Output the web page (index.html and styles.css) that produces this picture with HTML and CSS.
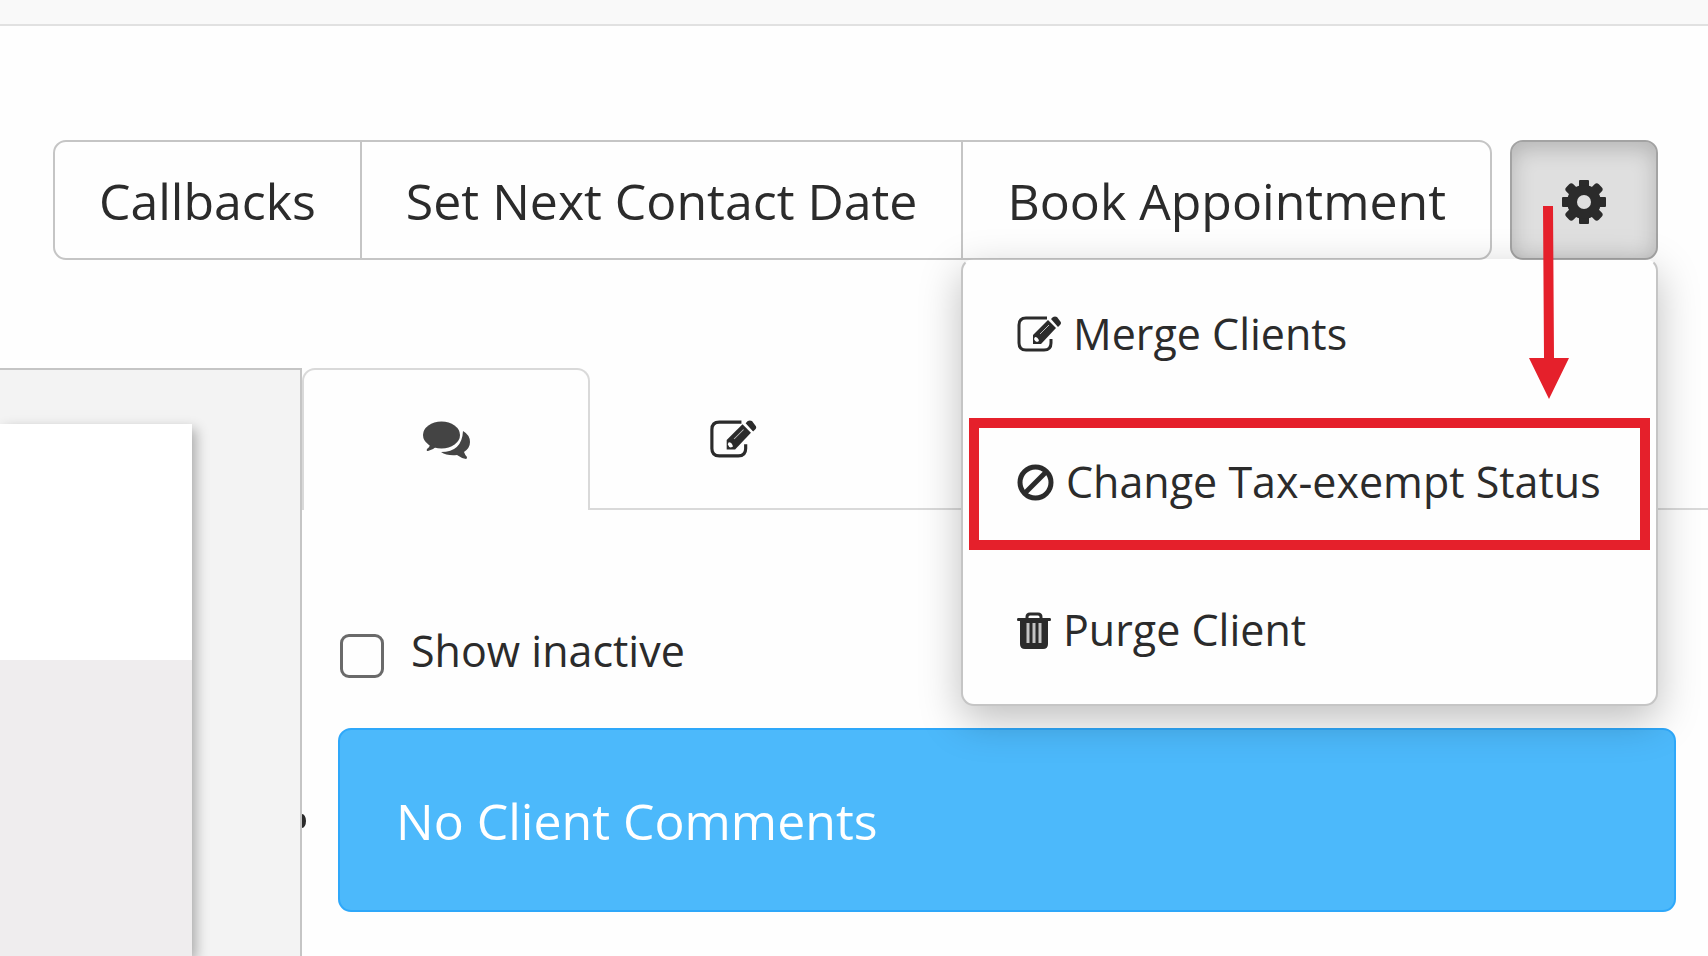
FILE: index.html
```html
<!DOCTYPE html>
<html lang="en">
<head>
<meta charset="utf-8">
<title>Client details</title>
<link rel="stylesheet" href="styles.css">
</head>
<body>
<svg class="sprite" aria-hidden="true">
  <symbol id="icon-edit" viewBox="0 0 44 36">
    <path d="M30 2H9Q2 2 2 9v18q0 7 7 7h18q7 0 7-7v-4" fill="none" stroke="currentColor" stroke-width="3"/>
    <path d="M16 19 31 4l8 8-15 16h-8z" fill="currentColor"/>
    <path d="M34 3l2-2q2-1 4 0l3 4q2 2 0 4l-2 2z" fill="currentColor"/>
    <path d="M32 3l9 9" stroke="#fff" stroke-width="1"/>
    <path d="M23 18l9-9" stroke="#bbb" stroke-width="1"/>
    <path d="M18 21q3 0 4 4l-2 1q-2 0-3-3z" fill="#fff"/>
  </symbol>
  <symbol id="icon-comments" viewBox="0 0 48 38">
    <ellipse cx="18.500" cy="14" rx="18.500" ry="13.500" fill="currentColor"/>
    <path d="M7 23q0 3-3 5-1 2 1 2 5-1 9-5z" fill="currentColor"/>
    <path d="M40 10q7 4 7 11 0 6-6 10 1 3 3 5 0 2-1 2-5-1-9-4-10 1-16-3 21 0 22-21z" fill="currentColor"/>
  </symbol>
</svg>
<header class="topbar"></header>
<div class="actions">
  <div class="btn-group">
    <button class="btn" type="button">Callbacks</button>
    <button class="btn" type="button">Set Next Contact Date</button>
    <button class="btn" type="button">Book Appointment</button>
  </div>
  <div class="settings">
    <button class="btn btn-gear" type="button" aria-label="Settings" aria-expanded="true">
      <svg class="gear" viewBox="-22 -22 44 44">
        <g fill="currentColor">
          <rect x="-5" y="-22" width="10" height="44" rx="1"/>
          <rect x="-22" y="-5" width="44" height="10" rx="1"/>
          <rect x="-5" y="-23" width="10" height="46" rx="3" transform="rotate(45)"/>
          <rect x="-5" y="-23" width="10" height="46" rx="3" transform="rotate(-45)"/>
          <circle r="17"/>
        </g>
        <circle r="7" fill="#dfdfdf"/>
      </svg>
    </button>
    <ul class="menu">
      <li><a class="item" href="#merge"><svg class="icon-edit"><use href="#icon-edit"/></svg>Merge Clients</a></li>
      <li><a class="item marked" href="#tax"><svg class="icon-ban" viewBox="0 0 37 37"><circle cx="18.500" cy="18.500" r="15.500" fill="none" stroke="currentColor" stroke-width="5"/><path d="M7.500 29.500l22-22" stroke="currentColor" stroke-width="5"/></svg>Change Tax-exempt Status</a></li>
      <li><a class="item" href="#purge"><svg class="icon-trash" viewBox="0 0 34 37"><path d="M10 7V5q0-3 3-3h8q3 0 3 3v2" fill="none" stroke="currentColor" stroke-width="3"/><path d="M1 6h32q1 0 1 1.500T33 9h-2v23q0 5-5 5H8q-5 0-5-5V9H1Q0 9 0 7.500T1 6z" fill="currentColor"/><path d="M11 11v20M17 11v20M23 11v20" stroke="#c4c4c4" stroke-width="3"/></svg>Purge Client</a></li>
    </ul>
    <svg class="arrow" viewBox="0 0 40 193" aria-hidden="true"><path d="M14 0h10l1 152h15L20 193 0 152h15z" fill="#e5202b"/></svg>
  </div>
</div>
<main class="workspace">
  <aside class="sidebar"><div class="sheet"><div class="sheet-head"></div></div></aside>
  <section class="panel">
    <nav class="tabs">
      <a class="tab active" href="#comments" aria-label="Comments"><svg class="icon-comments"><use href="#icon-comments"/></svg></a>
      <a class="tab" href="#notes" aria-label="Notes"><svg class="icon-note"><use href="#icon-edit"/></svg></a>
    </nav>
    <div class="content">
      <label class="check"><input type="checkbox">Show inactive</label>
      <div class="alert-row"><span class="bullet"></span><div class="alert">No Client Comments</div></div>
    </div>
  </section>
</main>
</body>
</html>
```
FILE: styles.css
```css
* { box-sizing: border-box; }
html { height: 100%; }
body {
  margin: 0;
  min-height: 100%;
  display: flex;
  flex-direction: column;
  overflow: hidden;
  background: #fefefe;
  color: #2b2b2b;
  font-family: "Open Sans", sans-serif;
}
.sprite { position: absolute; width: 0; height: 0; }
.topbar { height: 26px; background: #f9f9f9; border-bottom: 2px solid #e1e1e1; }
.actions {
  display: flex;
  justify-content: flex-end;
  gap: 18px;
  padding: 114px 50px 0 0;
}
.btn-group { display: flex; }
.btn {
  height: 120px;
  padding: 2px 44px 0;
  border: 2px solid #c5c5c5;
  background: #fefefe;
  color: inherit;
  font: 50px/68px "Open Sans", sans-serif;
  white-space: nowrap;
}
.btn-group .btn + .btn { margin-left: -2px; }
.btn-group .btn:first-child { border-radius: 13px 0 0 13px; }
.btn-group .btn:last-child { border-radius: 0 13px 13px 0; }
.settings { position: relative; }
.btn-gear {
  display: grid;
  place-items: center;
  width: 148px;
  padding-top: 4px;
  border-color: #a3a3a3;
  border-radius: 13px;
  background: #dfdfdf;
  box-shadow: inset 0 6px 22px rgba(0, 0, 0, .2);
}
.gear { width: 44px; height: 44px; }
.menu {
  position: absolute;
  z-index: 2;
  top: calc(100% - 2px);
  right: 0;
  min-width: 697px;
  margin: 0;
  padding: 0;
  list-style: none;
  background: #fefefe;
  border: 2px solid #c5c5c5;
  border-top-color: transparent;
  background-clip: padding-box;
  border-radius: 13px;
  box-shadow: 0 14px 42px rgba(0, 0, 0, .25);
}
.item {
  display: flex;
  align-items: center;
  height: 148px;
  padding: 0 54px;
  color: inherit;
  font-size: 43px;
  line-height: 58px;
  text-decoration: none;
  white-space: nowrap;
}
.marked { position: relative; }
.marked::after {
  content: "";
  position: absolute;
  inset: 10px 6px 6px;
  border: 10px solid #e5202b;
}
.icon-edit { width: 44px; height: 36px; margin-right: 12px; }
.icon-ban { width: 37px; height: 37px; margin-right: 12px; }
.icon-trash { width: 34px; height: 37px; margin-right: 12px; }
.arrow {
  position: absolute;
  z-index: 3;
  top: 66px;
  left: 19px;
  width: 40px;
  height: 193px;
}
.workspace { flex: 1; display: flex; margin-top: 108px; }
.sidebar {
  flex: none;
  display: flex;
  width: 302px;
  padding: 54px 108px 0 0;
  background: #f3f3f3;
  border: solid #c5c5c5;
  border-width: 2px 2px 0 0;
}
.sheet { flex: 1; background: #efedee; box-shadow: 4px 5px 12px rgba(0, 0, 0, .3); }
.sheet-head { height: 236px; background: #fff; }
.panel { flex: 1; min-width: 0; }
.tabs { display: flex; border-bottom: 2px solid #d9d9d9; }
.tab {
  display: grid;
  place-items: center;
  width: 286px;
  height: 140px;
  border: 2px solid transparent;
  border-bottom: 0;
  color: #2b2b2b;
}
.tab.active {
  width: 288px;
  margin-bottom: -2px;
  height: 142px;
  padding-left: 2px;
  border-color: #d9d9d9;
  border-radius: 13px 13px 0 0;
  background: #fefefe;
  color: #444;
}
.icon-comments, .icon-note { width: 48px; height: 38px; }
.content { padding: 108px 32px 0 36px; }
.check {
  display: flex;
  align-items: center;
  gap: 27px;
  font-size: 43px;
  line-height: 66px;
}
.check input {
  appearance: none;
  width: 44px;
  height: 44px;
  margin: 9px 0 0 2px;
  border: 3px solid #6a6a6a;
  border-radius: 9px;
  background: #fefefe;
}
.alert-row { position: relative; margin-top: 44px; }
.alert {
  padding: 59px 56px 57px;
  border: 2px solid #2ea8fa;
  border-radius: 13px;
  background: #4cb9fb;
  color: #fff;
  font-size: 50px;
  line-height: 64px;
}
.bullet {
  position: absolute;
  top: 86px;
  left: -36px;
  width: 4px;
  height: 14px;
  border-radius: 0 4px 4px 0 / 0 7px 7px 0;
  background: #2b2b2b;
}
```
